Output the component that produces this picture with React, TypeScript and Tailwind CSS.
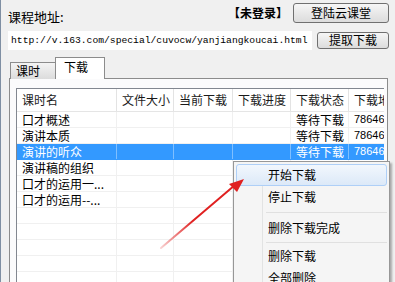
import React from 'react';

const cjk = { fontFamily: '"Noto Sans CJK SC", "Liberation Sans", sans-serif' };

interface Lesson {
  name: string;
  status?: string;
  url?: string;
  selected?: boolean;
}

const lessons: Lesson[] = [
  { name: '口才概述', status: '等待下载', url: '78646' },
  { name: '演讲本质', status: '等待下载', url: '78646' },
  { name: '演讲的听众', status: '等待下载', url: '78646', selected: true },
  { name: '演讲稿的组织' },
  { name: '口才的运用一...' },
  { name: '口才的运用--...' },
  { name: '' },
  { name: '' },
  { name: '' },
  { name: '' },
  { name: '' },
];

const columns = [
  { label: '课时名', w: 'w-[100px]' },
  { label: '文件大小', w: 'w-[57px]' },
  { label: '当前下载', w: 'w-[59px]' },
  { label: '下载进度', w: 'w-[58px]' },
  { label: '下载状态', w: 'w-[58px]' },
  { label: '下载地址', w: 'w-[60px]' },
];

export default function App() {
  return (
    <div
      className="relative w-[395px] h-[282px] overflow-hidden bg-[#f0f0f0] border-l border-[#7f8fa3] text-black"
      style={cjk}
    >
      {/* Address row */}
      <div className="flex items-center h-[20px] mt-[3px]">
        <span className="ml-[7px] text-[13px] leading-none pt-[6px]">课程地址:</span>
        <span className="ml-auto text-[12px] leading-none font-bold mr-[5px]">【未登录】</span>
        <button className="w-[96px] h-[20px] mr-[6px] text-[12px] leading-none rounded-[3px] border border-[#707070] bg-gradient-to-b from-[#f6f6f6] to-[#dcdcdc]">
          登陆云课堂
        </button>
      </div>

      <div className="flex items-center mt-[7px]">
        <div className="ml-[7px] w-[304px] h-[20px] bg-white border-t border-[#f0f0f0] flex items-center pl-[3px] overflow-hidden">
          <span className="text-[9.7px] leading-none whitespace-nowrap" style={{ fontFamily: '"Liberation Mono", monospace' }}>
            http://v.163.com/special/cuvocw/yanjiangkoucai.html
          </span>
        </div>
        <button className="ml-[5px] w-[72px] h-[17px] text-[12px] leading-none rounded-[3px] border border-[#707070] bg-gradient-to-b from-[#f6f6f6] to-[#dcdcdc]">
          提取下载
        </button>
      </div>

      {/* Tabs */}
      <div className="flex items-end ml-[9px] mt-[7px] h-[22px]">
        <div className="w-[46px] h-[17px] border border-b-0 border-[#8c8c8c] bg-gradient-to-b from-[#f4f4f4] to-[#dcdcdc] text-[12px] leading-none flex items-center pl-[5px]">
          课时
        </div>
        <div className="w-[50px] h-[22px] -ml-[1px] border border-b-0 border-[#8c8c8c] bg-white text-[12px] leading-none flex items-center pl-[8px] pb-[3px] z-10">
          下载
        </div>
      </div>

      {/* Tab panel */}
      <div className="ml-[8px] w-[379px] h-[220px] -mt-[1px] border border-[#8c8c8c] bg-[#fbfbfc] pt-[9px] pl-[6px]">
        <div className="w-[368px] h-[220px] border-l border-t border-[#828790] bg-white overflow-hidden">
          <div className="flex h-[23px] border-b border-[#e5e5e5] whitespace-nowrap">
            {columns.map((c) => (
              <div
                key={c.label}
                className={`${c.w} shrink-0 border-r border-[#e3e3e3] text-[12px] leading-none flex items-center pl-[5px] text-[#1a1a1a]`}
              >
                {c.label}
              </div>
            ))}
          </div>
          {lessons.map((l, i) => (
            <div
              key={i}
              className={`flex h-[16px] border-b whitespace-nowrap text-[12px] leading-none ${
                l.selected ? 'bg-[#3399ff] text-white border-[#3399ff]' : 'border-[#f0f0f0]'
              }`}
            >
              <div className={`w-[100px] shrink-0 border-r pl-[5px] flex items-center ${l.selected ? 'border-[#7fbfff]' : 'border-[#f0f0f0]'}`}>
                {l.name}
              </div>
              <div className={`w-[57px] shrink-0 border-r ${l.selected ? 'border-[#7fbfff]' : 'border-[#f0f0f0]'}`} />
              <div className={`w-[59px] shrink-0 border-r ${l.selected ? 'border-[#7fbfff]' : 'border-[#f0f0f0]'}`} />
              <div className={`w-[58px] shrink-0 border-r ${l.selected ? 'border-[#7fbfff]' : 'border-[#f0f0f0]'}`} />
              <div className={`w-[58px] shrink-0 border-r pl-[5px] flex items-center ${l.selected ? 'border-[#7fbfff]' : 'border-[#f0f0f0]'}`}>
                {l.status}
              </div>
              <div className="w-[60px] shrink-0 pl-[5px] flex items-center text-[11px]" style={{ fontFamily: '"Liberation Sans", sans-serif' }}>
                {l.url}
              </div>
            </div>
          ))}
        </div>
      </div>

      {/* Context menu */}
      <div className="absolute left-[232px] top-[161px] w-[157px] h-[130px] bg-[#f5f5f5] border border-[#979797] shadow-[2px_2px_2px_rgba(0,0,0,0.3)] p-[2px] text-[12px] leading-none">
        <div className="absolute left-[28px] top-[2px] bottom-0 w-[1px] bg-[#e2e3e3]" />
        <div className="relative h-[22px] rounded-[3px] border border-[#aecff7] bg-gradient-to-b from-[#f2f7fd] to-[#dce9f8] flex items-center pl-[31px]">
          开始下载
        </div>
        <div className="relative h-[22px] flex items-center pl-[32px]">停止下载</div>
        <div className="relative h-[9px] flex items-center pl-[30px]">
          <div className="w-full h-[1px] bg-[#e0e0e0]" />
        </div>
        <div className="relative h-[22px] flex items-center pl-[32px]">删除下载完成</div>
        <div className="relative h-[6px] flex items-center pl-[30px]">
          <div className="w-full h-[1px] bg-[#e0e0e0]" />
        </div>
        <div className="relative h-[22px] flex items-center pl-[32px]">删除下载</div>
        <div className="relative h-[22px] flex items-center pl-[32px]">全部删除</div>
      </div>

      {/* Red annotation arrow */}
      <svg className="absolute left-0 top-0 pointer-events-none" width="395" height="282">
        <defs>
          <linearGradient id="fade" x1="160" y1="248" x2="240" y2="180" gradientUnits="userSpaceOnUse">
            <stop offset="0" stopColor="#e02020" stopOpacity="0.2" />
            <stop offset="0.4" stopColor="#e02020" stopOpacity="1" />
          </linearGradient>
        </defs>
        <path d="M160 248 L234 185" stroke="url(#fade)" strokeWidth="2" strokeLinecap="round" />
        <polygon points="243,179 228,184 236,192" fill="#e02020" />
      </svg>
    </div>
  );
}
